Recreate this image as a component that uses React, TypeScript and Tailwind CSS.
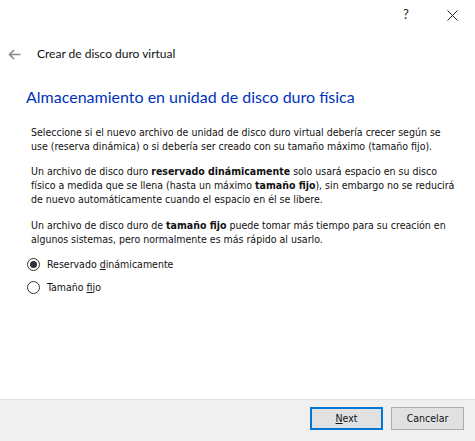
import React from "react";

const ui = { fontFamily: 'Lato, "Noto Sans", sans-serif' };
const body = { fontFamily: '"DejaVu Sans Condensed", "DejaVu Sans", "Liberation Sans", sans-serif' };

function Radio({ checked }: { checked?: boolean }) {
  return (
    <span className="flex h-[13px] w-[13px] items-center justify-center rounded-full border border-[#333333] bg-white">
      {checked && <span className="h-[7px] w-[7px] rounded-full bg-[#333333]" />}
    </span>
  );
}

export default function App() {
  return (
    <div className="flex h-[441px] w-[475px] flex-col bg-white text-black">
      {/* title bar */}
      <div className="flex h-[30px] items-center justify-end" style={ui}>
        <span className="w-[46px] text-center text-[13px] text-[#222]">?</span>
        <span className="flex w-[46px] items-center justify-center">
          <svg width="11" height="11" viewBox="0 0 11 11" fill="none" stroke="#222" strokeWidth="1">
            <path d="M0.5 0.5 L10.5 10.5 M10.5 0.5 L0.5 10.5" />
          </svg>
        </span>
      </div>

      {/* wizard header */}
      <div className="mt-[14px] flex h-[20px] items-center" style={ui}>
        <span className="ml-[8px] flex w-[13px] items-center">
          <svg width="13" height="11" viewBox="0 0 13 11" fill="none" stroke="#8a8a8a" strokeWidth="1.6">
            <path d="M12.5 5.5 H1.5 M6 1 L1.5 5.5 L6 10" />
          </svg>
        </span>
        <span className="ml-[16px] text-[12px] leading-[20px] text-[#111]">Crear de disco duro virtual</span>
      </div>

      <div className="ml-[26px] mt-[22px] text-[16px] leading-[22px] text-[#0033bc]" style={ui}>
        Almacenamiento en unidad de disco duro física
      </div>

      <div className="ml-[31px] mt-[17px] whitespace-nowrap text-[10.5px] leading-[14px] text-[#111]" style={body}>
        <p>
          Seleccione si el nuevo archivo de unidad de disco duro virtual debería crecer según se
          <br />
          use (reserva dinámica) o si debería ser creado con su tamaño máximo (tamaño fijo).
        </p>
        <p className="mt-[11px]">
          Un archivo de disco duro <b>reservado dinámicamente</b> solo usará espacio en su disco
          <br />
          físico a medida que se llena (hasta un máximo <b>tamaño fijo</b>), sin embargo no se reducirá
          <br />
          de nuevo automáticamente cuando el espacio en él se libere.
        </p>
        <p className="mt-[12px]">
          Un archivo de disco duro de <b>tamaño fijo</b> puede tomar más tiempo para su creación en
          <br />
          algunos sistemas, pero normalmente es más rápido al usarlo.
        </p>
      </div>

      <div className="ml-[27px] mt-[7px] text-[10.5px] text-[#111]" style={body}>
        <div className="flex h-[23px] items-center gap-[7px]">
          <Radio checked />
          <span>
            Reservado <span className="underline">d</span>inámicamente
          </span>
        </div>
        <div className="flex h-[23px] items-center gap-[7px]">
          <Radio />
          <span>
            Tamaño <span className="underline">f</span>ijo
          </span>
        </div>
      </div>

      <div className="flex-1" />

      {/* footer */}
      <div className="flex h-[42px] items-start justify-end gap-[8px] border-t border-[#dfdfdf] bg-[#f0f0f0] pr-[11px] pt-[7px]" style={body}>
        <button className="flex h-[23px] w-[73px] items-center justify-center border-2 border-[#0078d7] bg-[#e1e1e1] text-[10.5px] text-[#111]">
          <span className="underline">N</span>ext
        </button>
        <button className="flex h-[23px] w-[73px] items-center justify-center border border-[#adadad] bg-[#e1e1e1] text-[10.5px] text-[#111]">
          Cancelar
        </button>
      </div>
    </div>
  );
}
